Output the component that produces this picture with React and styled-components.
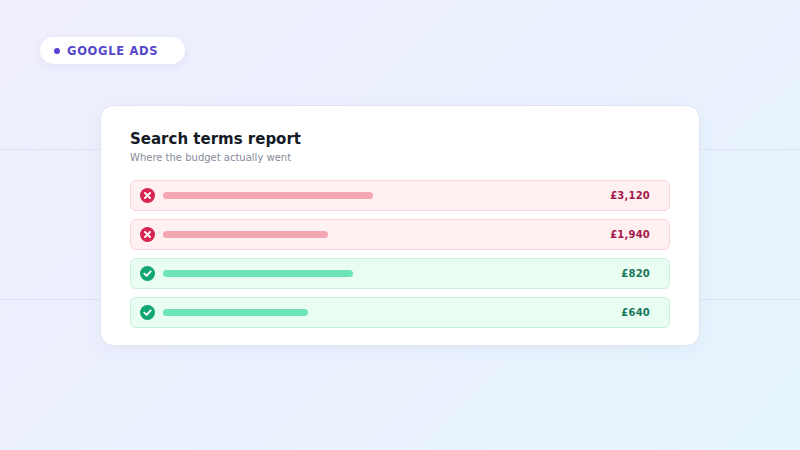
import styled, { createGlobalStyle } from "styled-components";

const GlobalStyle = createGlobalStyle`
  html, body {
    margin: 0;
    padding: 0;
  }
  body {
    font-family: "DejaVu Sans", "Noto Sans", sans-serif;
    width: 800px;
    height: 450px;
    overflow: hidden;
    background-color: #ecf0fe;
    background-image:
      linear-gradient(to bottom,
        transparent 149px,
        rgba(208, 214, 236, 0.55) 149px,
        rgba(208, 214, 236, 0.55) 150px,
        transparent 150px,
        transparent 299px,
        rgba(208, 214, 236, 0.55) 299px,
        rgba(208, 214, 236, 0.55) 300px,
        transparent 300px),
      linear-gradient(135deg, #efeefd 0%, #eaf1fe 55%, #e5f4fd 100%);
  }
`;

const Page = styled.div`
  width: 800px;
  height: 450px;
  box-sizing: border-box;
  padding: 37px 100px 0 40px;
  display: flex;
  flex-direction: column;
`;

const Badge = styled.div`
  align-self: flex-start;
  display: flex;
  align-items: center;
  gap: 7px;
  height: 27px;
  padding: 0 27px 0 14px;
  border-radius: 999px;
  background: #ffffff;
  box-shadow: 0 2px 8px rgba(90, 80, 180, 0.08);
  color: #5646c8;
  font-size: 11.5px;
  font-weight: 700;
  letter-spacing: 0.7px;
`;

const Dot = styled.span`
  width: 6px;
  height: 6px;
  border-radius: 50%;
  background: #5a3fd8;
`;

const Card = styled.section`
  margin: 41px 0 0 60px;
  width: 600px;
  box-sizing: border-box;
  padding: 24px 29px 17px 29px;
  background: #ffffff;
  border: 1px solid #dfe3f3;
  border-radius: 13px;
  box-shadow: 0 4px 18px rgba(100, 110, 170, 0.06);
`;

const Title = styled.h2`
  margin: 0;
  font-size: 15px;
  font-weight: 700;
  color: #141a26;
  line-height: 18px;
`;

const Subtitle = styled.p`
  margin: 3px 0 0;
  font-size: 10px;
  color: #858b99;
  line-height: 14px;
`;

const List = styled.div`
  margin-top: 15px;
  display: flex;
  flex-direction: column;
  gap: 8px;
`;

const Row = styled.div`
  display: flex;
  align-items: center;
  height: 31px;
  box-sizing: border-box;
  padding: 0 19px 0 9px;
  border-radius: 6px;
  border: 1.5px solid ${(p) => (p.$good ? "#c8f1dd" : "#fad4da")};
  background: ${(p) => (p.$good ? "#eafdf3" : "#fff0f2")};
`;

const IconWrap = styled.span`
  display: flex;
  width: 15px;
  height: 15px;
  color: ${(p) => (p.$good ? "#12a574" : "#d6264f")};
`;

const Bar = styled.span`
  height: 7px;
  margin-left: 8px;
  border-radius: 999px;
  background: ${(p) => (p.$good ? "#6ce5b4" : "#f4a6b3")};
`;

const Amount = styled.span`
  margin-left: auto;
  font-size: 10px;
  font-weight: 700;
  letter-spacing: 0.2px;
  color: ${(p) => (p.$good ? "#17785a" : "#a5194a")};
`;

const CrossIcon = () => (
  <svg viewBox="0 0 16 16" width="15" height="15">
    <circle cx="8" cy="8" r="8" fill="currentColor" />
    <path
      d="M5.3 5.3 L10.7 10.7 M10.7 5.3 L5.3 10.7"
      stroke="#fff"
      strokeWidth="2"
      strokeLinecap="round"
    />
  </svg>
);

const CheckIcon = () => (
  <svg viewBox="0 0 16 16" width="15" height="15">
    <circle cx="8" cy="8" r="8" fill="currentColor" />
    <path
      d="M4.6 8.2 L7 10.5 L11.4 5.8"
      fill="none"
      stroke="#fff"
      strokeWidth="2"
      strokeLinecap="round"
      strokeLinejoin="round"
    />
  </svg>
);

const terms = [
  { amount: "£3,120", bar: 210, good: false },
  { amount: "£1,940", bar: 165, good: false },
  { amount: "£820", bar: 190, good: true },
  { amount: "£640", bar: 145, good: true },
];

export default function App() {
  return (
    <>
      <GlobalStyle />
      <Page>
        <Badge>
          <Dot />
          GOOGLE ADS
        </Badge>
        <Card>
          <Title>Search terms report</Title>
          <Subtitle>Where the budget actually went</Subtitle>
          <List>
            {terms.map((t) => (
              <Row key={t.amount} $good={t.good}>
                <IconWrap $good={t.good}>
                  {t.good ? <CheckIcon /> : <CrossIcon />}
                </IconWrap>
                <Bar $good={t.good} style={{ width: t.bar }} />
                <Amount $good={t.good}>{t.amount}</Amount>
              </Row>
            ))}
          </List>
        </Card>
      </Page>
    </>
  );
}
